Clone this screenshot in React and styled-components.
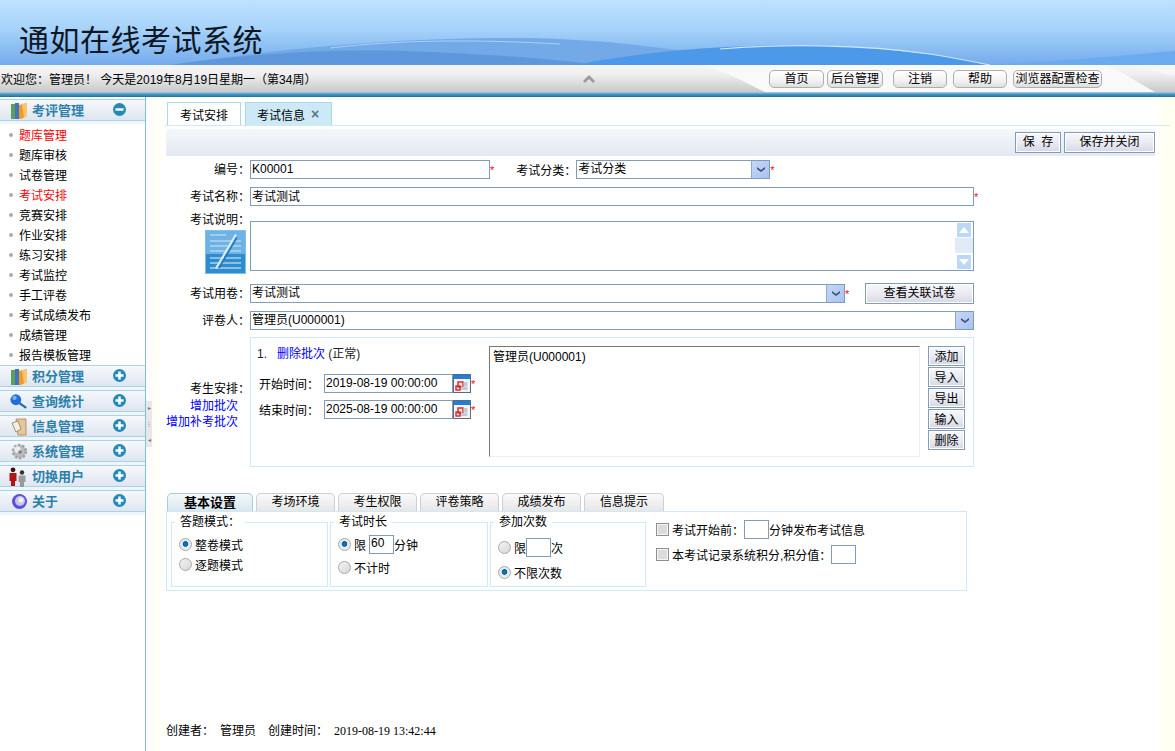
import React from 'react';
import styled, { createGlobalStyle } from 'styled-components';

const fontStack = `"Liberation Sans", "Noto Sans CJK SC", sans-serif`;
const lineBlue = '#cfeaf7';
const inputBorder = '#7f9db9';

const GlobalStyle = createGlobalStyle`
  html, body {
    margin: 0;
    height: 100%;
    overflow: hidden;
    background: #fff;
    font: 12px ${fontStack};
    color: #000;
  }
  * { box-sizing: border-box; }
`;

const Page = styled.div`
  width: 1175px;
  height: 751px;
  display: flex;
  flex-direction: column;
`;

const Banner = styled.header`
  position: relative;
  flex: none;
  height: 65px;
  padding: 20px 0 0 19px;
  background: linear-gradient(180deg, #bfe2fe 0%, #a6d2fa 45%, #74abec 100%);
  overflow: hidden;
`;

const BannerArt = styled.svg`
  position: absolute;
  left: 0;
  top: 0;
`;

const Title = styled.h1`
  position: relative;
  margin: 0;
  font: 400 30px/36px "Noto Sans CJK SC", sans-serif;
  letter-spacing: 0.5px;
  color: #0c1722;
`;

const InfoBar = styled.div`
  position: relative;
  flex: none;
  height: 27px;
  display: flex;
  align-items: center;
  background: linear-gradient(180deg, #f6f6f6 0%, #efefef 35%, #c9c9c9 100%);
`;

const BarArt = styled.svg`
  position: absolute;
  left: 0;
  top: 0;
`;

const Welcome = styled.div`
  position: relative;
  width: 583px;
  padding-left: 1px;
  white-space: pre;
`;

const Caret = styled.svg`
  position: relative;
  display: block;
`;

const BarButtons = styled.div`
  position: relative;
  margin-left: auto;
  padding-right: 73px;
  display: flex;
`;

const BarButton = styled.button`
  width: ${p => p.$w}px;
  height: 18px;
  margin-left: ${p => p.$gap || 0}px;
  padding: 0;
  border: 1px solid #aeaeae;
  border-radius: 5px;
  background: linear-gradient(180deg, #fff 0%, #f2f2f2 60%, #dedede 100%);
  font: 12px/16px ${fontStack};
  color: #000;
  white-space: nowrap;
`;

const Strip = styled.div`
  flex: none;
  height: 5px;
  background: linear-gradient(180deg, #a9d5ea 0%, #4b9ac6 40%, #1f6f9b 100%);
`;

const Main = styled.div`
  flex: 1;
  min-height: 0;
  display: flex;
`;

const Sidebar = styled.aside`
  flex: none;
  width: 146px;
  padding-top: 2px;
  border-right: 1px solid #86bcd8;
  background: #fff;
`;

const GroupHead = styled.div`
  position: relative;
  height: 25px;
  display: flex;
  align-items: center;
  padding: 0 19px 3px 10px;
  border-top: 1px solid #a9d3e6;
  background: linear-gradient(180deg, #f6f8fb 0%, #dfe6f0 82%, #a9d3e6 82%, #a9d3e6 88%, #eef6fb 88%);
`;

const GroupIcon = styled.span`
  width: 18px;
  height: 20px;
  margin-right: 4px;
  display: flex;
  align-items: center;
  justify-content: center;
  flex: none;
`;

const GroupName = styled.span`
  flex: 1;
  font: 700 13px/16px ${fontStack};
  color: #2b80ab;
`;

const Toggle = styled.svg`
  display: block;
  flex: none;
  margin-top: -2px;
`;

const MenuList = styled.ul`
  list-style: none;
  margin: 0;
  padding: 2px 0 0;
  height: 241px;
`;

const MenuItem = styled.li`
  position: relative;
  height: 20px;
  padding-left: 19px;
  line-height: 20px;
  color: ${p => (p.$active ? '#f00' : '#000')};
  &::before {
    content: '';
    position: absolute;
    left: 9px;
    top: 7px;
    width: 4px;
    height: 4px;
    border-radius: 50%;
    background: #a5adba;
  }
`;

const Splitter = styled.div`
  flex: none;
  width: 7px;
  display: flex;
  flex-direction: column;
  padding-top: 304px;
  background: #fcfdfa;
`;

const SplitHandle = styled.div`
  width: 6px;
  height: 46px;
  display: flex;
  flex-direction: column;
  align-items: center;
  justify-content: space-between;
  padding: 4px 0;
  background: #e8e8e8;
  font-size: 6px;
  line-height: 6px;
  color: #777;
`;

const Content = styled.main`
  flex: 1;
  min-width: 0;
  display: flex;
  flex-direction: column;
  padding: 5px 5px 0 13px;
  background: linear-gradient(90deg, #fffff6 0, #fff 14px, #fff 1002px, #fffff2 1010px);
`;

const PageTabs = styled.div`
  display: flex;
  height: 24px;
  margin-left: -1px;
  padding-left: 2px;
  gap: 4px;
  border-bottom: 1px solid ${lineBlue};
`;

const PageTab = styled.div`
  width: ${p => p.$w}px;
  height: 23px;
  padding-left: ${p => (p.$active ? 12 : 11)}px;
  display: flex;
  align-items: center;
  gap: 4px;
  border: 1px solid #a8d9ec;
  border-bottom: 0;
  background: ${p => (p.$active ? '#fff' : '#cde9f6')};
  font-size: 12px;
`;

const TabClose = styled.span`
  font: 700 14px/12px ${fontStack};
  color: #55788f;
  margin-left: 2px;
`;

const Toolbar = styled.div`
  height: 27px;
  width: 989px;
  margin-top: 3px;
  padding: 3px 0 0;
  display: flex;
  justify-content: flex-end;
  gap: 3px;
  background: linear-gradient(180deg, #f5f7fa 0%, #e3e9f2 100%);
`;

const FormButton = styled.button`
  width: ${p => p.$w}px;
  height: ${p => p.$h || 21}px;
  padding: ${p => (p.$h ? '2px 0 0' : 0)};
  flex: none;
  border: 1px solid ${inputBorder};
  background: linear-gradient(180deg, #f7f7fb 0%, #e9e9f1 55%, #d5d7e3 100%);
  box-shadow: inset 0 0 0 1px #fff;
  font: 12px/${p => (p.$h ? 16 : 19)}px ${fontStack};
  color: #000;
  white-space: pre;
`;

const Row = styled.div`
  display: flex;
  align-items: ${p => p.$align || 'center'};
  margin-top: ${p => p.$top}px;
`;

const Label = styled.label`
  flex: none;
  width: 84px;
  text-align: right;
  line-height: 16px;
`;

const Field = styled.input`
  width: ${p => p.$w}px;
  height: ${p => p.$h || 19}px;
  flex: none;
  padding: 0 1px 2px;
  border: 1px solid ${inputBorder};
  border-radius: 0;
  background: #fff;
  outline: 0;
  font: 12px ${fontStack};
  color: #000;
`;

const Star = styled.span`
  flex: none;
  width: ${p => p.$w || 'auto'};
  color: #f00;
  font-size: 11px;
  line-height: 12px;
`;

const Select = styled.div`
  display: flex;
  flex: none;
  width: ${p => p.$w}px;
  height: 19px;
  border: 1px solid ${inputBorder};
  background: #fff;
`;

const SelectText = styled.div`
  flex: 1;
  padding-left: 1px;
  line-height: 17px;
`;

const SelectArrow = styled.div`
  width: 18px;
  border-left: 1px solid #8ea8d0;
  background: linear-gradient(135deg, #c6d6f8, #a9c2f0);
  display: flex;
  align-items: center;
  justify-content: center;
`;

const GapLabel = styled.label`
  margin-left: 22px;
  width: 60px;
`;

const NoteColumn = styled.div`
  flex: none;
  width: 84px;
  height: 62px;
  display: flex;
  flex-direction: column;
  align-items: flex-end;
  padding-right: 4px;
  line-height: 16px;
`;

const NoteLabel = styled.div`
  margin-right: -4px;
  height: 18px;
`;

const NotePad = styled.svg`
  display: block;
`;

const NoteArea = styled.div`
  position: relative;
  width: 724px;
  height: 50px;
  margin-top: 9px;
  border: 1px solid ${inputBorder};
`;

const Scroller = styled.div`
  position: absolute;
  right: 0;
  top: 0;
  bottom: 0;
  width: 18px;
  padding: 1px 0 1px 2px;
  display: flex;
  flex-direction: column;
  justify-content: space-between;
  background: linear-gradient(180deg, #fff 0, #fff 16px, #e1ebf7 16px, #e1ebf7 31px, #fff 31px);
`;

const ScrollBtn = styled.div`
  width: 14px;
  height: 14px;
  display: flex;
  align-items: center;
  justify-content: center;
  background: #bdd8f4;
`;

const ArrangeColumn = styled.div`
  flex: none;
  width: 84px;
  padding-top: 44px;
  text-align: right;
  line-height: 16px;
`;

const ArrangeLabel = styled.div`
  margin-bottom: 1px;
`;

const ArrangeLink = styled.a`
  display: block;
  margin-right: 12px;
  color: #00f;
`;

const BatchPanel = styled.section`
  display: flex;
  width: 724px;
  height: 130px;
  padding: 8px 0 0;
  border: 1px solid ${lineBlue};
`;

const BatchInfo = styled.div`
  flex: none;
  width: 238px;
`;

const BatchHead = styled.div`
  height: 16px;
  padding-left: 6px;
  line-height: 16px;
  white-space: pre;
  color: #222;
`;

const BatchLink = styled.a`
  color: #00f;
`;

const BatchTime = styled.div`
  display: flex;
  align-items: center;
  height: 19px;
  margin-top: ${p => p.$top}px;
  padding-left: 8px;
`;

const BatchLabel = styled.span`
  width: 65px;
`;

const CalendarIcon = styled.svg`
  display: block;
  flex: none;
`;

const People = styled.div`
  flex: none;
  width: 431px;
  height: 111px;
  padding: 3px;
  border: 1px solid;
  border-color: #777 #eee #eee #777;
  line-height: 14px;
`;

const SideButtons = styled.div`
  margin-left: 8px;
  display: flex;
  flex-direction: column;
  gap: 1px;
`;

const OptionTabs = styled.div`
  display: flex;
  height: 18px;
  margin-top: 26px;
  padding-left: 1px;
  gap: 3px;
`;

const OptionTab = styled.div`
  width: ${p => p.$w}px;
  height: 18px;
  text-align: center;
  border: 1px solid ${p => (p.$active ? '#a8cdd8' : '#cfcfcf')};
  border-bottom: 0;
  border-radius: 5px 5px 0 0;
  background: ${p => (p.$active
    ? 'linear-gradient(180deg, #f4f8f9, #d8e8ee)'
    : 'linear-gradient(180deg, #fafafa, #e6e6e6)')};
  font: ${p => (p.$active ? 700 : 400)} ${p => (p.$active ? 13 : 12)}px/17px ${fontStack};
`;

const OptionPanel = styled.section`
  display: flex;
  width: 801px;
  height: 80px;
  padding: 3px 0 0 4px;
  border: 1px solid ${lineBlue};
`;

const Group = styled.fieldset`
  flex: none;
  width: ${p => p.$w}px;
  height: 72px;
  margin: 0 2px 0 0;
  padding: 0 0 0 7px;
  border: 1px solid ${lineBlue};
`;

const GroupTitle = styled.legend`
  margin-left: -4px;
  padding: 0 5px;
  line-height: 14px;
`;

const Choice = styled.div`
  display: flex;
  align-items: center;
  height: 20px;
  margin-top: ${p => p.$top || 0}px;
  gap: 3px;
`;

const Radio = styled.span`
  width: 13px;
  height: 13px;
  flex: none;
  border-radius: 50%;
  border: 1px solid #a8a8a8;
  background: ${p => (p.$on
    ? 'radial-gradient(circle at 50% 45%, #0f7fc0 0, #0a5f96 30%, #dfe8ee 38%, #f4f4f4 100%)'
    : 'linear-gradient(135deg, #f4f4f4, #d6d6d6)')};
`;

const ChoiceField = styled(Field)`
  margin: 0 ${p => p.$side}px;
`;

const Checks = styled.div`
  margin-left: 8px;
  padding-top: 5px;
`;

const CheckRow = styled.div`
  display: flex;
  align-items: center;
  height: 19px;
  margin-bottom: 6px;
  white-space: pre;
`;

const Check = styled.span`
  width: 13px;
  height: 13px;
  margin-right: 3px;
  flex: none;
  border: 1px solid #8f8f8f;
  box-shadow: inset 0 0 0 1px #f6f6f6;
  background: #dcdcdc;
`;

const Footer = styled.footer`
  margin-top: auto;
  height: 27px;
  display: flex;
  gap: 6px;
  line-height: 14px;
`;

const FooterName = styled.span`
  margin-right: 6px;
`;

const FooterDate = styled.span`
  font-family: "Liberation Serif", serif;
`;

const Books = () => (
  <svg width="17" height="18" viewBox="0 0 17 18">
    <rect x="0" y="2" width="4" height="15" fill="#5aa05a" />
    <rect x="4" y="1" width="4" height="16" fill="#3f74c4" />
    <path d="M8 3 L16 1 V14 L10 17 H8 Z" fill="#f09a2a" />
    <path d="M11 2.2 L16 1 V14 L13 15.5 Z" fill="#fbc66b" />
  </svg>
);

const Magnifier = () => (
  <svg width="20" height="18" viewBox="0 0 20 18">
    <path d="M10 10 L18 15.5" stroke="#23679c" strokeWidth="2.4" />
    <circle cx="6.5" cy="6.5" r="6" fill="#1f6fd8" />
    <circle cx="5" cy="4.5" r="2.4" fill="#7ab4f2" />
  </svg>
);

const Notes = () => (
  <svg width="16" height="18" viewBox="0 0 16 18">
    <path d="M5 1 H15 V17 H7 Z" fill="#e6c69a" stroke="#a98555" strokeWidth="0.8" />
    <path d="M1 5 L7 3 L10 11 L5 14 Z" fill="#f6efe0" stroke="#8a7a5c" strokeWidth="0.8" />
  </svg>
);

const Gear = () => (
  <svg width="17" height="17" viewBox="0 0 17 17">
    <circle cx="8.5" cy="8.5" r="6.4" fill="#bcbcbc" stroke="#a2a2a2" strokeWidth="2.6" strokeDasharray="2.4 1.6" />
    <circle cx="6.5" cy="6.5" r="3.2" fill="#ededed" />
    <circle cx="9" cy="9" r="1.8" fill="#7e7e7e" />
  </svg>
);

const Users = () => (
  <svg width="18" height="20" viewBox="0 0 18 20" style={{ marginLeft: -3 }}>
    <circle cx="4" cy="2.8" r="2.4" fill="#3a1010" />
    <path d="M0.5 6 H7.5 V14 H6 V19 H2 V14 H0.5 Z" fill="#b01414" />
    <circle cx="13" cy="5.5" r="2.2" fill="#333" />
    <path d="M9.5 8.5 H16.5 V15 H15 V20 H11 V15 H9.5 Z" fill="#9a9a9a" />
  </svg>
);

const Orb = () => (
  <svg width="17" height="17" viewBox="0 0 17 17">
    <circle cx="8.5" cy="8.5" r="7.5" fill="#5a50d8" />
    <circle cx="9" cy="8" r="5" fill="#c9c4f6" />
    <circle cx="10" cy="7" r="2.5" fill="#f3f1ff" />
  </svg>
);

const GroupToggle = ({ open }) => (
  <Toggle width="13" height="13" viewBox="0 0 13 13">
    <circle cx="6.5" cy="6.5" r="6.5" fill="#2389b6" />
    <rect x="2.5" y="5.25" width="8" height="2.5" fill="#fff" />
    {!open && <rect x="5.25" y="2.5" width="2.5" height="8" fill="#fff" />}
  </Toggle>
);

const Chevron = () => (
  <svg width="10" height="7" viewBox="0 0 10 7">
    <path d="M1 1 L5 4 L9 1 V3 L5 6 L1 3 Z" fill="#3d4f72" />
  </svg>
);

const Calendar = () => (
  <CalendarIcon width="18" height="19" viewBox="0 0 18 19">
    <rect x="0.5" y="0.5" width="17" height="18" fill="#f4f4f4" stroke="#5a6a80" />
    <rect x="1" y="1" width="16" height="4" fill="#1f7fd6" />
    <rect x="5" y="8" width="5" height="5" fill="none" stroke="#e02020" strokeWidth="1.4" />
    <rect x="3" y="12" width="4" height="4" fill="none" stroke="#e02020" strokeWidth="1.4" />
    <rect x="10.5" y="8" width="4" height="4" fill="#c4cad2" />
    <rect x="8" y="12.5" width="6.5" height="3.5" fill="#c4cad2" />
  </CalendarIcon>
);

const groupsAfter = [
  { name: '积分管理', icon: <Books /> },
  { name: '查询统计', icon: <Magnifier /> },
  { name: '信息管理', icon: <Notes /> },
  { name: '系统管理', icon: <Gear /> },
  { name: '切换用户', icon: <Users /> },
  { name: '关于', icon: <Orb /> },
];

const menu = ['题库管理', '题库审核', '试卷管理', '考试安排', '竞赛安排', '作业安排', '练习安排', '考试监控', '手工评卷', '考试成绩发布', '成绩管理', '报告模板管理'];
const activeMenu = ['题库管理', '考试安排'];

const optionTabs = [
  { name: '基本设置', w: 86, active: true },
  { name: '考场环境', w: 79 },
  { name: '考生权限', w: 79 },
  { name: '评卷策略', w: 79 },
  { name: '成绩发布', w: 79 },
  { name: '信息提示', w: 80 },
];

export default function App() {
  return (
    <Page>
      <GlobalStyle />
      <Banner>
        <BannerArt width="1175" height="65" viewBox="0 0 1175 65">
          <path d="M170 65 C280 48 400 38 510 38 C590 38 650 46 720 56 L760 65 Z" fill="#74a9e8" />
          <path d="M170 65 C260 52 340 48 430 52 C520 56 560 60 600 65 Z" fill="#5f97dd" />
          <path d="M575 65 C640 52 720 45 800 45 C880 46 950 56 990 65 Z" fill="#4c99ea" />
          <path d="M985 65 C1050 62 1120 56 1175 51 V65 Z" fill="#6aabef" />
          <path d="M720 49 C780 44 860 44 930 54 C955 58 975 62 990 65" fill="none" stroke="#cfe5fa" strokeWidth="1.2" />
          <path d="M330 48 C400 40 470 39 560 44" fill="none" stroke="#a9d0f5" strokeWidth="1" />
        </BannerArt>
        <Title>通如在线考试系统</Title>
      </Banner>
      <InfoBar>
        <BarArt width="1175" height="27" viewBox="0 0 1175 27">
          <path d="M702 0 C730 8 750 20 765 27 H1155 C1135 16 1122 6 1104 0 Z" fill="#f9f9f9" />
          <path d="M1125 0 H1175 V10 C1160 8 1140 4 1125 0 Z" fill="#f6f6f6" />
        </BarArt>
        <Welcome>{'欢迎您：管理员！ 今天是2019年8月19日星期一（第34周）'}</Welcome>
        <Caret width="12" height="8" viewBox="0 0 12 8">
          <path d="M6 0 L12 6 L10 8 L6 4 L2 8 L0 6 Z" fill="#9a9a9a" />
        </Caret>
        <BarButtons>
          <BarButton $w={55}>首页</BarButton>
          <BarButton $w={56} $gap={3}>后台管理</BarButton>
          <BarButton $w={54} $gap={10}>注销</BarButton>
          <BarButton $w={54} $gap={6}>帮助</BarButton>
          <BarButton $w={89} $gap={6}>浏览器配置检查</BarButton>
        </BarButtons>
      </InfoBar>
      <Strip />
      <Main>
        <Sidebar>
          <GroupHead>
            <GroupIcon><Books /></GroupIcon>
            <GroupName>考评管理</GroupName>
            <GroupToggle open />
          </GroupHead>
          <MenuList>
            {menu.map(item => (
              <MenuItem key={item} $active={activeMenu.includes(item)}>{item}</MenuItem>
            ))}
          </MenuList>
          {groupsAfter.map(group => (
            <GroupHead key={group.name}>
              <GroupIcon>{group.icon}</GroupIcon>
              <GroupName>{group.name}</GroupName>
              <GroupToggle />
            </GroupHead>
          ))}
        </Sidebar>
        <Splitter>
          <SplitHandle>
            <span>▸</span>
            <span>⋮</span>
            <span>◂</span>
          </SplitHandle>
        </Splitter>
        <Content>
          <PageTabs>
            <PageTab $w={74} $active>考试安排</PageTab>
            <PageTab $w={87}>考试信息<TabClose>×</TabClose></PageTab>
          </PageTabs>
          <Toolbar>
            <FormButton $w={46}>{'保  存'}</FormButton>
            <FormButton $w={91}>保存并关闭</FormButton>
          </Toolbar>

          <Row $top={4}>
            <Label>编号：</Label>
            <Field $w={240} defaultValue="K00001" />
            <Star>*</Star>
            <GapLabel>考试分类：</GapLabel>
            <Select $w={194}>
              <SelectText>考试分类</SelectText>
              <SelectArrow><Chevron /></SelectArrow>
            </Select>
            <Star>*</Star>
          </Row>
          <Row $top={8}>
            <Label>考试名称：</Label>
            <Field $w={724} defaultValue="考试测试" />
            <Star>*</Star>
          </Row>
          <Row $top={6} $align="flex-start">
            <NoteColumn>
              <NoteLabel>考试说明：</NoteLabel>
              <NotePad width="41" height="44" viewBox="0 0 41 44">
                <rect width="41" height="44" fill="#7cc0ee" />
                <rect x="1" y="1" width="39" height="42" fill="#6fb2e4" />
                <rect x="1" y="24" width="39" height="19" fill="#2f8ccf" />
                <path d="M5 5 H21 M5 11 H36 M5 16 H36 M5 21 H36 M5 28 H36 M5 33 H36 M5 38 H36" stroke="#b8dcf4" strokeWidth="2" opacity="0.65" />
                <path d="M10 38 L30 4 L32 5 L12 39 Z" fill="#d6ecfb" />
                <path d="M13 38 L31 7 L32.5 8 L15 38 Z" fill="#2577b8" />
              </NotePad>
            </NoteColumn>
            <NoteArea>
              <Scroller>
                <ScrollBtn>
                  <svg width="10" height="6" viewBox="0 0 10 6"><path d="M5 0 L10 6 H0 Z" fill="#fff" /></svg>
                </ScrollBtn>
                <ScrollBtn>
                  <svg width="10" height="6" viewBox="0 0 10 6"><path d="M0 0 H10 L5 6 Z" fill="#fff" /></svg>
                </ScrollBtn>
              </Scroller>
            </NoteArea>
          </Row>
          <Row $top={9}>
            <Label>考试用卷：</Label>
            <Select $w={595}>
              <SelectText>考试测试</SelectText>
              <SelectArrow><Chevron /></SelectArrow>
            </Select>
            <Star $w="20px">*</Star>
            <FormButton $w={109}>查看关联试卷</FormButton>
          </Row>
          <Row $top={7}>
            <Label>评卷人：</Label>
            <Select $w={724}>
              <SelectText>管理员(U000001)</SelectText>
              <SelectArrow><Chevron /></SelectArrow>
            </Select>
          </Row>
          <Row $top={7} $align="flex-start">
            <ArrangeColumn>
              <ArrangeLabel>考生安排：</ArrangeLabel>
              <ArrangeLink>增加批次</ArrangeLink>
              <ArrangeLink>增加补考批次</ArrangeLink>
            </ArrangeColumn>
            <BatchPanel>
              <BatchInfo>
                <BatchHead>{'1.   '}<BatchLink>删除批次</BatchLink>{' (正常)'}</BatchHead>
                <BatchTime $top={12}>
                  <BatchLabel>开始时间：</BatchLabel>
                  <Field $w={129} defaultValue="2019-08-19 00:00:00" />
                  <Calendar />
                  <Star>*</Star>
                </BatchTime>
                <BatchTime $top={7}>
                  <BatchLabel>结束时间：</BatchLabel>
                  <Field $w={129} defaultValue="2025-08-19 00:00:00" />
                  <Calendar />
                  <Star>*</Star>
                </BatchTime>
              </BatchInfo>
              <People>管理员(U000001)</People>
              <SideButtons>
                {['添加', '导入', '导出', '输入', '删除'].map(label => (
                  <FormButton key={label} $w={37} $h={20}>{label}</FormButton>
                ))}
              </SideButtons>
            </BatchPanel>
          </Row>

          <OptionTabs>
            {optionTabs.map(tab => (
              <OptionTab key={tab.name} $w={tab.w} $active={tab.active}>{tab.name}</OptionTab>
            ))}
          </OptionTabs>
          <OptionPanel>
            <Group $w={157}>
              <GroupTitle>答题模式：</GroupTitle>
              <Choice $top={5}><Radio $on />整卷模式</Choice>
              <Choice><Radio />逐题模式</Choice>
            </Group>
            <Group $w={158}>
              <GroupTitle>考试时长</GroupTitle>
              <Choice $top={5}><Radio $on />限<ChoiceField $w={25} $side={0} defaultValue="60" /><span style={{ marginLeft: -3 }}>分钟</span></Choice>
              <Choice $top={3}><Radio />不计时</Choice>
            </Group>
            <Group $w={156}>
              <GroupTitle>参加次数</GroupTitle>
              <Choice $top={8}><Radio />限<ChoiceField $w={25} $side={-3} />次</Choice>
              <Choice $top={5}><Radio $on />不限次数</Choice>
            </Group>
            <Checks>
              <CheckRow>
                <Check />考试开始前：<Field $w={25} />分钟发布考试信息
              </CheckRow>
              <CheckRow>
                <Check />本考试记录系统积分,积分值：<Field $w={25} />
              </CheckRow>
            </Checks>
          </OptionPanel>

          <Footer>
            <span>创建者：</span>
            <FooterName>管理员</FooterName>
            <span>创建时间：</span>
            <FooterDate>2019-08-19 13:42:44</FooterDate>
          </Footer>
        </Content>
      </Main>
    </Page>
  );
}
